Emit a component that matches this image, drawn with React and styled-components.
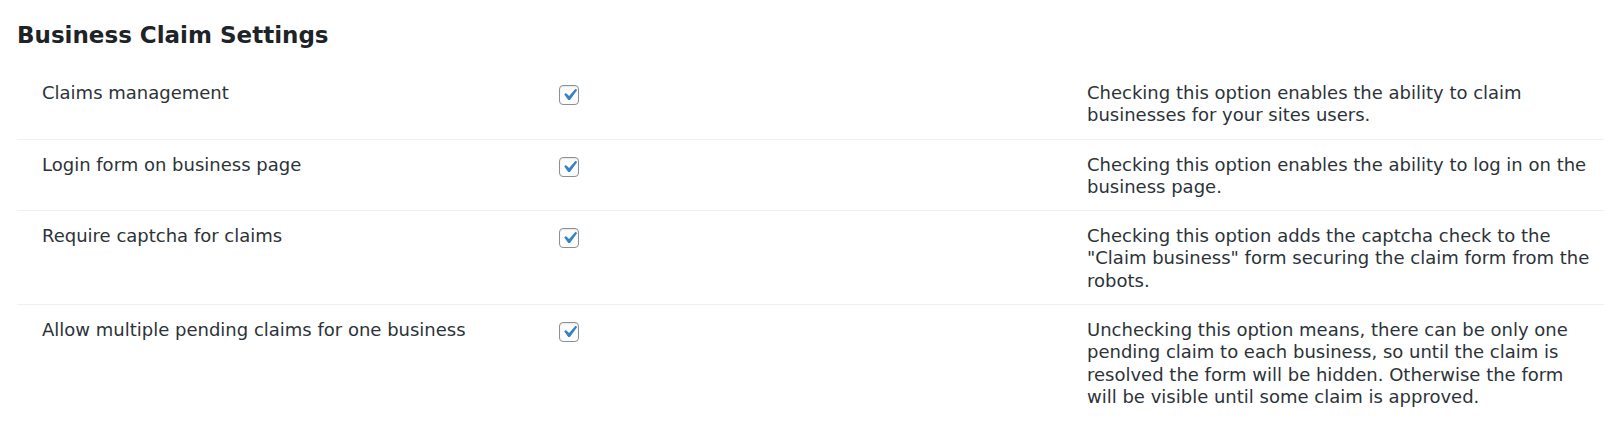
import React from "react"
import styled, { createGlobalStyle } from "styled-components"

const settings = [
  {
    label: "Claims management",
    checked: true,
    description:
      "Checking this option enables the ability to claim businesses for your sites users.",
  },
  {
    label: "Login form on business page",
    checked: true,
    description:
      "Checking this option enables the ability to log in on the business page.",
  },
  {
    label: "Require captcha for claims",
    checked: true,
    description:
      'Checking this option adds the captcha check to the "Claim business" form securing the claim form from the robots.',
  },
  {
    label: "Allow multiple pending claims for one business",
    checked: true,
    description:
      "Unchecking this option means, there can be only one pending claim to each business, so until the claim is resolved the form will be hidden. Otherwise the form will be visible until some claim is approved.",
  },
]

export default function App() {
  return (
    <>
      <GlobalStyle />
      <Wrapper>
        <Title>Business Claim Settings</Title>
        <Table>
          {settings.map((item) => (
            <Row key={item.label}>
              <Label>{item.label}</Label>
              <CheckCell>
                <Checkbox checked={item.checked} />
              </CheckCell>
              <Description>{item.description}</Description>
            </Row>
          ))}
        </Table>
      </Wrapper>
    </>
  )
}

function Checkbox({ checked }) {
  return (
    <Box>
      {checked && (
        <svg width="25" height="24" viewBox="0 0 20 20" preserveAspectRatio="none">
          <path
            d="M14.83 4.89l1.34.94-5.81 8.38H9.02L5.78 9.67l1.34-1.25 2.57 2.4z"
            fill="#3582c4"
          />
        </svg>
      )}
    </Box>
  )
}

const GlobalStyle = createGlobalStyle`
  body {
    margin: 0;
    background: #ffffff;
    font-family: "DejaVu Sans", Verdana, sans-serif;
  }
`
const Wrapper = styled.div`
  padding: 20px 16px 0 17px;
`
const Title = styled.h2`
  margin: 0 0 18px;
  font-size: 23px;
  font-weight: 700;
  line-height: 30px;
  color: #1d2327;
`
const Table = styled.div`
  display: grid;
`
const Row = styled.div`
  display: grid;
  grid-template-columns: 517px 528px 507px;
  padding: 14px 0 12px 25px;
  font-size: 18px;
  line-height: 22.3px;
  color: #2c3338;
  & + & {
    border-top: 1px solid #f0f0f1;
  }
`
const Label = styled.div``
const CheckCell = styled.div`
  padding-top: 3px;
`
const Box = styled.div`
  width: 18px;
  height: 18px;
  border: 1px solid #8c8f94;
  border-radius: 4px;
  background: #ffffff;
  display: flex;
  align-items: center;
  justify-content: center;
  box-shadow: inset 0 1px 2px rgba(0, 0, 0, 0.1);
  svg {
    flex: none;
    margin: -3px;
  }
`
const Description = styled.div``
